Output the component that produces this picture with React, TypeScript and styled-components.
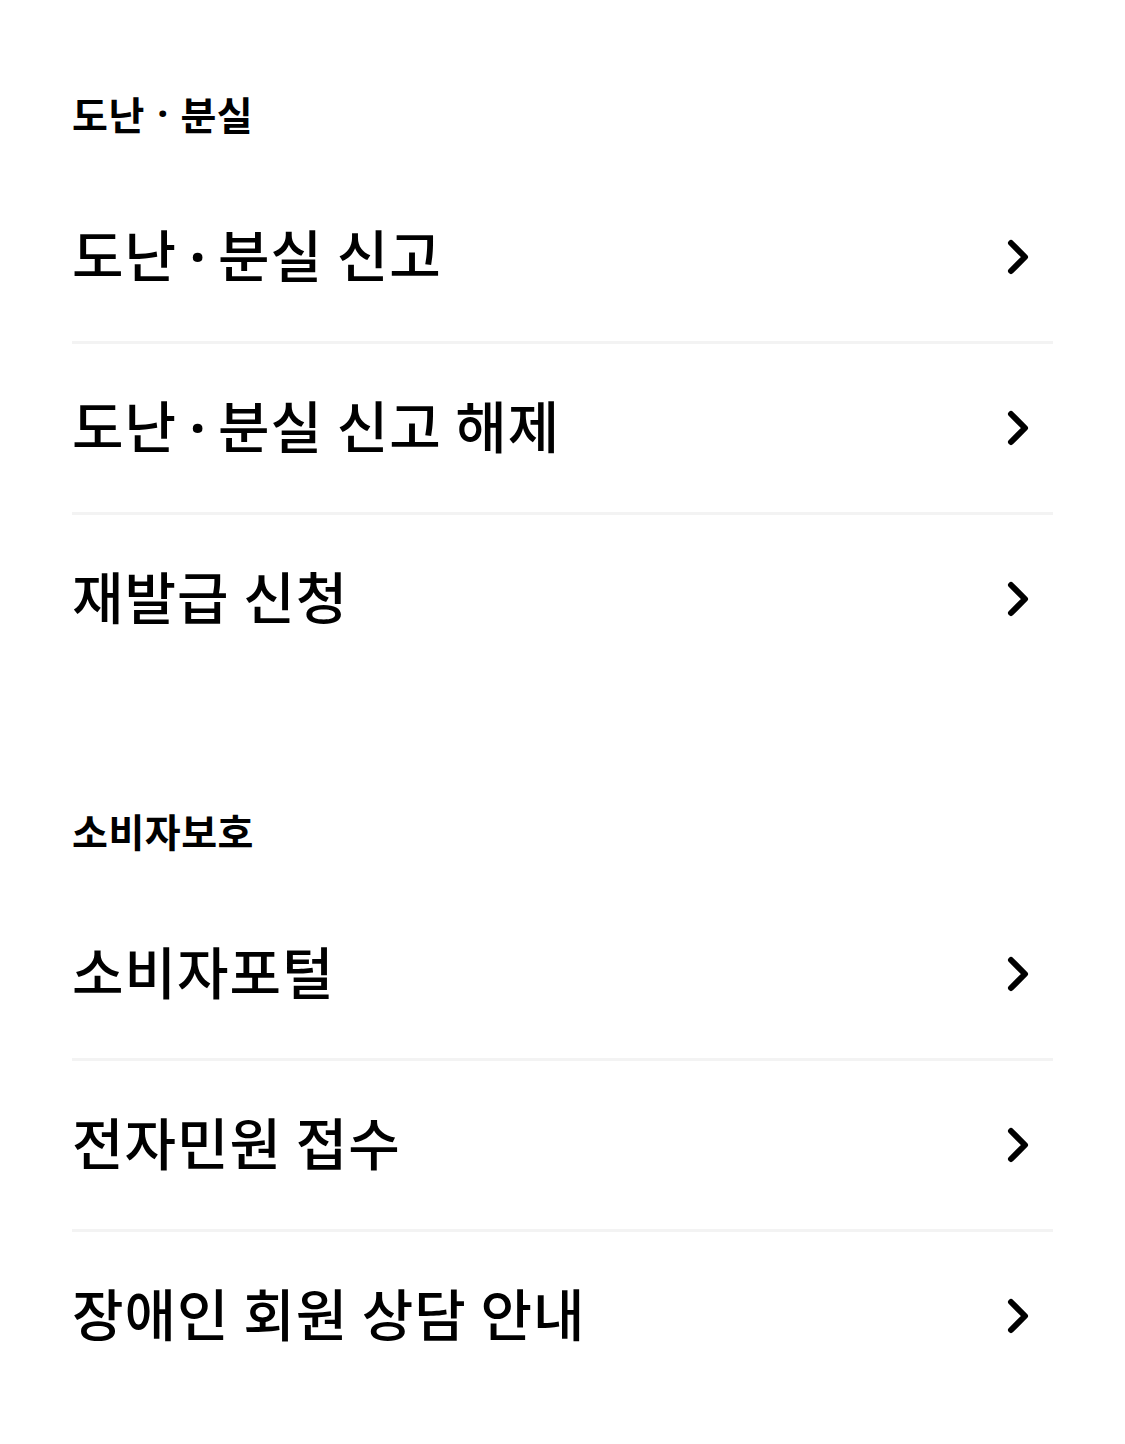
import React from "react";
import styled, { createGlobalStyle } from "styled-components";

const Global = createGlobalStyle`
  html, body { margin: 0; padding: 0; background: #ffffff; }
  body { font-family: "Noto Sans CJK KR", "Noto Sans", sans-serif; color: #000; }
`;

const Page = styled.div`
  width: 1125px;
  padding: 0 72px;
  box-sizing: border-box;
  display: flex;
  flex-direction: column;
`;

const Section = styled.section`
  display: flex;
  flex-direction: column;
  padding-top: 80px;
  & + & {
    margin-top: 34px;
  }
`;

const SectionTitle = styled.h2`
  margin: 0 0 23px;
  height: 70px;
  padding-bottom: 5px;
  box-sizing: border-box;
  display: flex;
  align-items: center;
  font-family: "Noto Sans CJK KR", sans-serif;
  font-size: 39px;
  font-weight: 700;
  letter-spacing: 0.5px;
  white-space: pre;
  color: #000;
`;

const List = styled.ul`
  list-style: none;
  margin: 0;
  padding: 0;
  display: flex;
  flex-direction: column;
`;

const Row = styled.li`
  height: 168px;
  display: flex;
  align-items: center;
  justify-content: space-between;
  border-bottom: 3px solid #f3f3f3;
  &:last-child {
    border-bottom: none;
  }
`;

const Label = styled.span`
  padding-bottom: 9px;
  font-family: "Noto Sans CJK KR", sans-serif;
  font-size: 56px;
  font-weight: 500;
  letter-spacing: 1px;
  color: #000;
  white-space: pre;
`;

const Sep = styled.span<{ $gap: number }>`
  display: inline-block;
  font-family: "Noto Sans", sans-serif;
  font-weight: 700;
  margin: 0 ${(p) => p.$gap}px;
  letter-spacing: 0;
`;

const Chevron = styled.svg`
  width: 34px;
  height: 42px;
  margin-right: 16px;
  flex: none;
`;

const Arrow = () => (
  <Chevron viewBox="0 0 34 42">
    <polyline
      points="8,7 22,21 8,35"
      fill="none"
      stroke="#000"
      strokeWidth="6"
      strokeLinecap="round"
      strokeLinejoin="round"
    />
  </Chevron>
);

const renderText = (t: string, gap: number) => {
  const parts = t.split("·");
  if (parts.length === 1) return t;
  return (
    <>
      {parts[0]}
      <Sep $gap={gap}>·</Sep>
      {parts[1]}
    </>
  );
};

const sections = [
  { title: "도난 · 분실", items: ["도난 · 분실 신고", "도난 · 분실 신고 해제", "재발급 신청"] },
  { title: "소비자보호", items: ["소비자포털", "전자민원 접수", "장애인 회원 상담 안내"] },
];

export default function App() {
  return (
    <>
      <Global />
      <Page>
        {sections.map((s) => (
          <Section key={s.title}>
            <SectionTitle>{renderText(s.title, 3)}</SectionTitle>
            <List>
              {s.items.map((it) => (
                <Row key={it}>
                  <Label>{renderText(it, -1)}</Label>
                  <Arrow />
                </Row>
              ))}
            </List>
          </Section>
        ))}
      </Page>
    </>
  );
}
